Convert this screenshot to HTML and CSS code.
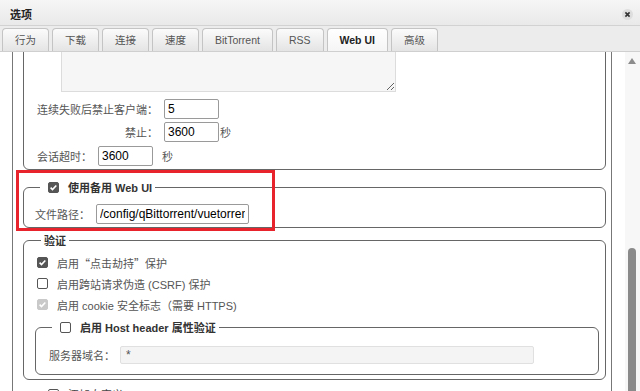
FILE: index.html
```html
<!DOCTYPE html>
<html lang="zh-CN">
<head>
    <meta charset="UTF-8">
    <title>选项</title>
    <link rel="stylesheet" href="styles.css">
</head>
<body>
    <div class="window">
        <div class="titlebar">
            <span class="title">选项</span>
            <span class="close">
                <svg width="11" height="11" viewBox="0 0 11 11"><circle cx="5.5" cy="5.5" r="5.5" fill="#dedede"/><path d="M3.4 3.4l4.2 4.2M7.6 3.4l-4.2 4.2" stroke="#333" stroke-width="1.6"/></svg>
            </span>
        </div>

        <div class="tabs">
            <div class="tab">行为</div>
            <div class="tab">下载</div>
            <div class="tab">连接</div>
            <div class="tab">速度</div>
            <div class="tab">BitTorrent</div>
            <div class="tab">RSS</div>
            <div class="tab active">Web UI</div>
            <div class="tab">高级</div>
        </div>

        <div class="body">
            <div class="viewport">
                <div class="panel">
                    <fieldset class="set-first">
                        <textarea class="area"></textarea>
                        <div class="pairs">
                            <label>连续失败后禁止客户端：</label>
                            <div class="field"><input class="num" type="text" value="5"></div>
                            <label>禁止：</label>
                            <div class="field"><input class="num" type="text" value="3600"><span class="unit">秒</span></div>
                        </div>
                        <div class="line">
                            <label>会话超时：</label>
                            <input class="num" type="text" value="3600">
                            <span class="unit wide">秒</span>
                        </div>
                    </fieldset>

                    <fieldset class="set-alt">
                        <legend><span class="cb on"><svg width="9" height="9" viewBox="0 0 9 9"><path d="M1.6 4.6l1.9 1.9 3.8-4" stroke="#fff" stroke-width="1.6" fill="none"/></svg></span>使用备用 Web UI</legend>
                        <div class="line">
                            <label>文件路径：</label>
                            <input class="path" type="text" value="/config/qBittorrent/vuetorrent">
                        </div>
                    </fieldset>

                    <fieldset class="set-auth">
                        <legend>验证</legend>
                        <div class="check"><span class="cb on"><svg width="9" height="9" viewBox="0 0 9 9"><path d="M1.6 4.6l1.9 1.9 3.8-4" stroke="#fff" stroke-width="1.6" fill="none"/></svg></span>启用<span class="q">“</span>点击劫持<span class="q">”</span>保护</div>
                        <div class="check"><span class="cb"></span>启用跨站请求伪造 (CSRF) 保护</div>
                        <div class="check"><span class="cb dim"><svg width="9" height="9" viewBox="0 0 9 9"><path d="M1.6 4.6l1.9 1.9 3.8-4" stroke="#fff" stroke-width="1.6" fill="none"/></svg></span>启用 cookie 安全标志（需要 HTTPS)</div>

                        <fieldset class="set-host">
                            <legend><span class="cb"></span>启用 Host header 属性验证</legend>
                            <div class="line tight">
                                <label>服务器域名：</label>
                                <input class="host" type="text" value="*" disabled>
                            </div>
                        </fieldset>
                    </fieldset>

                    <fieldset class="set-header">
                        <legend class="plain"><span class="cb"></span>添加自定义 HTTP header</legend>
                        <div class="line"><label>header</label></div>
                    </fieldset>
                </div>
            </div>
            <div class="scrollbar">
                <span class="arrow"></span>
                <span class="thumb"></span>
            </div>
        </div>

        <div class="mark"></div>
    </div>
</body>
</html>
```

FILE: styles.css
```css
* {
    box-sizing: border-box;
}
body {
    margin: 0;
    font-family: "Liberation Sans", "Noto Sans CJK SC", sans-serif;
    font-size: 11px;
    color: #555;
    background-color: #fff;
}
.window {
    position: relative;
    width: 640px;
    height: 391px;
    overflow: hidden;
}

/* title + tabs */
.titlebar {
    display: flex;
    align-items: center;
    height: 26px;
    padding-top: 3px;
    background: linear-gradient(#f6f6f6, #e9e9e9);
    border-bottom: 1px solid #d2d2d2;
}
.title {
    padding-left: 10px;
    font-weight: bold;
    color: #222;
}
.close {
    display: flex;
    margin-left: auto;
    margin-right: 7px;
}
.tabs {
    display: flex;
    gap: 3px;
    height: 26px;
    padding: 2px 0 0 2px;
    background-color: #ececec;
    border-bottom: 1px solid #cfcfcf;
}
.tab {
    height: 23px;
    line-height: 22px;
    padding: 0 12px;
    border: 1px solid #c4c4c4;
    border-bottom: none;
    border-radius: 4px 4px 0 0;
    background: linear-gradient(#fbfbfb, #e4e4e4);
    font-size: 10.5px;
    color: #555;
}
.tab.active {
    background: linear-gradient(#fff, #f5f5f5);
    font-weight: bold;
    color: #222;
}

/* scrolled content */
.body {
    display: flex;
    height: 339px;
}
.viewport {
    flex: 1;
    overflow: hidden;
}
.panel {
    margin: -60px 13px 0 12px;
    padding: 0 5px 0 10px;
    border-left: 1px solid #777;
    border-right: 1px solid #777;
}
fieldset {
    margin: 0;
    min-width: 0;
    border: 1px solid #666;
    border-radius: 6px;
}
legend {
    display: flex;
    align-items: center;
    height: 16px;
    padding: 0 3px;
    font-weight: bold;
    color: #333;
}
.set-first {
    padding: 9px 5px 3px 13px;
}
.area {
    display: block;
    width: 335px;
    height: 90px;
    margin: 0 0 0 24px;
    background-color: #f6f6f6;
    border: 1px solid #dcdcdc;
}
.pairs {
    display: grid;
    grid-template-columns: auto auto;
    justify-content: start;
    align-items: center;
    column-gap: 6px;
    row-gap: 3px;
    margin-top: 7px;
}
.pairs label {
    justify-self: end;
}
.field,
.line {
    display: flex;
    align-items: center;
}
.line {
    gap: 6px;
    margin-top: 4px;
}
.line.tight {
    gap: 5px;
    margin-top: 0;
}
.num,
.path,
.host {
    height: 20px;
    padding: 0 3px;
    border: 1px solid #9a9a9a;
    border-radius: 2px;
    font: 12px "Liberation Sans", sans-serif;
    color: #000;
    background-color: #fff;
}
.num {
    width: 55px;
}
.unit {
    margin-left: 1px;
}
.unit.wide {
    margin-left: 3px;
}
.set-alt {
    margin-top: 9px;
    padding: 9px 5px 3px 11px;
}
.set-alt legend {
    margin-left: 5px;
}
.set-alt .line {
    margin-top: 0;
}
.path {
    width: 153px;
}
.set-auth {
    margin-top: 4px;
    padding: 4px 6px 4px 11px;
}
.set-auth legend {
    margin-left: 6px;
}
.check {
    display: flex;
    align-items: center;
    height: 21px;
    padding-left: 2px;
}
.check .cb {
    margin-right: 9px;
}
.q {
    font-family: "Noto Sans CJK SC", sans-serif;
}
.set-host {
    margin-top: 4px;
    padding: 11px 13px 10px 13px;
}
.set-host legend {
    margin-left: 3px;
}
.host {
    width: 414px;
    height: 18px;
    padding: 0 5px;
    color: #555;
    background-color: #f4f4f4;
    border-color: #e0e0e0;
}
.set-header {
    margin-top: 6px;
    padding: 6px 5px 6px 11px;
}
.set-header legend {
    margin-left: 5px;
    font-weight: normal;
    color: #444;
}

/* checkbox look */
.cb {
    display: inline-flex;
    align-items: center;
    justify-content: center;
    width: 11px;
    height: 11px;
    border: 1px solid #555;
    border-radius: 2px;
    background-color: #fff;
    flex-shrink: 0;
}
legend .cb {
    margin: 0 9px 0 5px;
}
.cb.on {
    background-color: #555;
    border-color: #555;
}
.cb.dim {
    background-color: #c9c9c9;
    border-color: #c9c9c9;
}

/* scrollbar */
.scrollbar {
    display: flex;
    flex-direction: column;
    width: 15px;
    padding: 6px 0 0 3px;
    background-color: #f7f7f7;
    overflow: hidden;
}
.arrow {
    width: 0;
    height: 0;
    border-left: 4.5px solid transparent;
    border-right: 4.5px solid transparent;
    border-bottom: 6px solid #8c8c8c;
}
.thumb {
    flex-shrink: 0;
    width: 8px;
    height: 160px;
    margin-top: 184px;
    border-radius: 4px;
    background-color: #8a8a8a;
}

/* annotation */
.mark {
    position: absolute;
    left: 16px;
    top: 170px;
    width: 259px;
    height: 61px;
    border: 3px solid #e8232b;
}
```
